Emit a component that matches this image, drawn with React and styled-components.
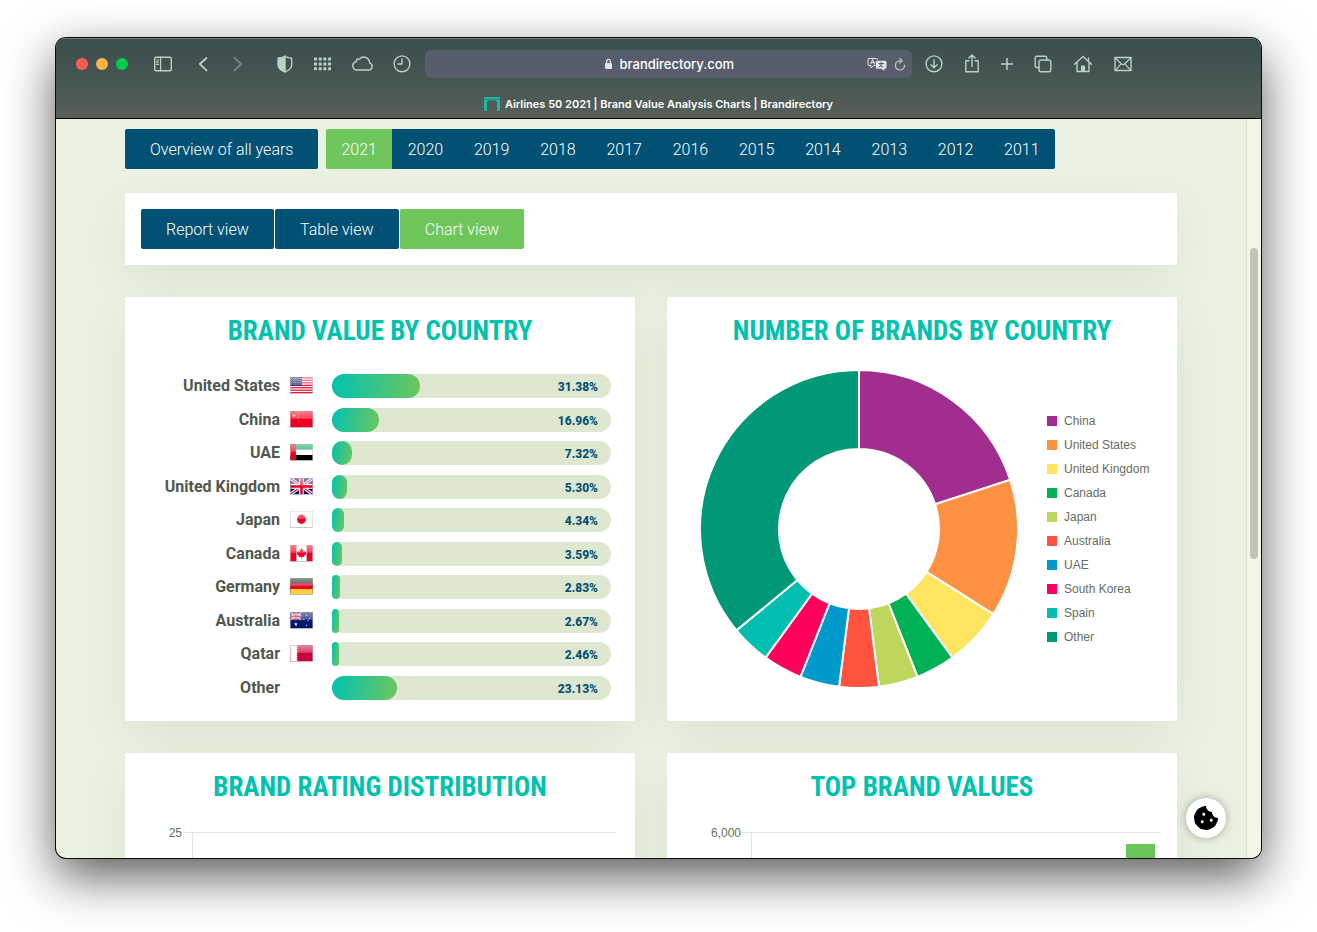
import React from "react";
import styled, { createGlobalStyle } from "styled-components";
import { FaCookieBite } from "react-icons/fa";

const Global = createGlobalStyle`
  *, *::before, *::after { box-sizing: border-box; }
  body { margin: 0; background: #fff; font-family: Roboto, "Liberation Sans", sans-serif; }
  button { border: 0; padding: 0; background: none; color: inherit; font: inherit; cursor: pointer; }
  h2 { margin: 0; }
  svg { display: block; }
`;

const Desktop = styled.div`
  height: 100vh;
  padding: 38px 56px 74px;
  overflow: hidden;
`;

const Window = styled.div`
  position: relative;
  height: 100%;
  display: flex;
  flex-direction: column;
  border-radius: 10px;
  overflow: hidden;
  background: #eaf1e1;
  box-shadow: 0 0 0 1px #0a0f0c, 0 18px 50px rgba(0, 0, 0, 0.66);
`;

const Chrome = styled.header`
  flex: none;
  background: linear-gradient(#394e4d, #485853 60%, #575e58);
  border-bottom: 1px solid #000;
  box-shadow: inset 0 1px 0 #6f807e;
  color: #b9d2c3;
`;

const Toolbar = styled.div`
  display: flex;
  align-items: center;
  height: 52px;
  padding: 0 129px 0 20px;
`;

const Lights = styled.div`
  display: flex;
  gap: 8px;
  margin-right: 25px;
`;

const Light = styled.button`
  width: 12px;
  height: 12px;
  border-radius: 50%;
  && { background: ${(p) => p.$color}; }
`;

const ToolGroup = styled.div`
  display: flex;
  align-items: center;
  gap: ${(p) => p.$gap || 20}px;
  margin-right: ${(p) => p.$after || 0}px;
`;

const ToolButton = styled.button`
  display: block;
  opacity: ${(p) => (p.disabled ? 0.4 : 1)};
`;

const AddressBar = styled.div`
  flex: 1;
  min-width: 0;
  height: 28px;
  margin-right: 13px;
  padding: 0 6px;
  display: grid;
  grid-template-columns: 1fr auto 1fr;
  align-items: center;
  border-radius: 6px;
  background: #575d6a;
  color: #e6e6ea;
`;

const AddressLabel = styled.label`
  grid-column: 2;
  display: flex;
  align-items: center;
  gap: 7px;
`;

const AddressInput = styled.input`
  width: 114px;
  padding: 0;
  border: 0;
  outline: 0;
  background: transparent;
  color: #fff;
  font: 500 13px/20px Inter, sans-serif;
`;

const AddressTools = styled.div`
  display: flex;
  justify-content: flex-end;
  align-items: center;
  gap: 7px;
`;

const TabTitle = styled.div`
  height: 28px;
  display: flex;
  align-items: center;
  justify-content: center;
  gap: 5px;
  color: #fff;
  font: 600 11px/16px Inter, sans-serif;
  white-space: nowrap;
`;

const Viewport = styled.div`
  flex: 1;
  min-height: 0;
  display: flex;
`;

const Page = styled.main`
  flex: 1;
  min-width: 0;
  overflow: hidden;
  padding: 10px 16px 0;
`;

const Container = styled.div`
  max-width: 1052px;
  margin: 0 auto;
`;

const ScrollTrack = styled.div`
  width: 15px;
  padding: 129px 3px 0;
  background: #f2f7e7;
  border-left: 1px solid #dbe4c9;
`;

const ScrollThumb = styled.div`
  width: 8px;
  height: 311px;
  border-radius: 4px;
  background: #c0c5b8;
`;

const YearNav = styled.nav`
  display: flex;
  gap: 8px;
  margin-bottom: 24px;
`;

const NavButton = styled.button`
  && {
    height: 40px;
    padding: 0 25px;
    border-radius: 2px;
    background: ${(p) => (p.$active ? "#6fc65b" : "#005174")};
    color: #fff;
    font-size: 16px;
    font-weight: 300;
    white-space: nowrap;
  }
`;

const OverviewButton = styled(NavButton)`
  && { width: 193px; }
`;

const YearGroup = styled.div`
  flex: 0 1 729px;
  display: flex;
  border-radius: 2px;
  overflow: hidden;
`;

const YearButton = styled(NavButton)`
  && {
    flex: 1;
    padding: 0;
    border-radius: 0;
  }
`;

const Card = styled.section`
  background: #fff;
  border-radius: 2px;
  box-shadow: 0 16px 48px -8px rgba(60, 80, 40, 0.1);
`;

const ViewBar = styled(Card)`
  display: flex;
  gap: 1px;
  padding: 16px;
  margin-bottom: 32px;
`;

const ViewButton = styled(NavButton)`
  && { min-width: 124px; }
`;

const CardGrid = styled.div`
  display: grid;
  grid-template-columns: 1fr 1fr;
  gap: 32px;
`;

const ChartCard = styled(Card)`
  min-height: 424px;
  padding-top: 16px;
`;

const CardTitle = styled.h2`
  margin-bottom: 24px;
  color: #00c2ad;
  font: 700 27px/37px "Roboto Condensed", "Liberation Sans Narrow", "Liberation Sans", sans-serif;
  text-align: center;
  text-transform: uppercase;
`;

const BarList = styled.div`
  height: 326px;
  padding: 0 24px;
  display: flex;
  flex-direction: column;
  justify-content: space-between;
`;

const BarRow = styled.div`
  display: grid;
  grid-template-columns: 131px 32px 1fr;
  column-gap: 10px;
  align-items: center;
  height: 24px;
`;

const BarLabel = styled.span`
  color: #50584f;
  font-size: 16px;
  font-weight: 700;
  line-height: 24px;
  text-align: right;
  white-space: nowrap;
`;

const Track = styled.div`
  position: relative;
  height: 24px;
  border-radius: 12px;
  background: #dee7d0;
`;

const Fill = styled.div`
  height: 24px;
  border-radius: 12px;
  background: linear-gradient(100deg, #00c2b2, #6fc65b);
`;

const Percent = styled.span`
  position: absolute;
  top: 1px;
  right: 13px;
  color: #005174;
  font-size: 12px;
  font-weight: 800;
  line-height: 24px;
`;

const DonutLayout = styled.div`
  display: flex;
  justify-content: space-between;
  align-items: flex-start;
  padding: 0 25px 0 32px;
`;

const DonutSvg = styled.svg`
  flex: none;
  width: 320px;
  height: 320px;
  margin-top: -5px;
`;

const Legend = styled.ul`
  margin: 35px 0 0;
  padding: 0;
  width: 105px;
  list-style: none;
`;

const LegendItem = styled.li`
  display: flex;
  align-items: center;
  gap: 7px;
  color: #666d63;
  font: 12px/24px "Liberation Sans", sans-serif;
  white-space: nowrap;

  &::before {
    content: "";
    width: 10px;
    height: 10px;
    background: ${(p) => p.$color};
  }
`;

const AxisChart = styled.svg`
  width: 100%;
  height: auto;
  margin-top: -16px;
  font: 12px "Liberation Sans", sans-serif;
`;

const CookieButton = styled.button`
  position: absolute;
  right: 35px;
  bottom: 20px;
  && {
    width: 40px;
    height: 40px;
    display: grid;
    place-items: center;
    border-radius: 50%;
    background: #fff;
    color: #000;
    box-shadow: 0 0 8px rgba(0, 0, 0, 0.3);
  }
`;

const Icon = ({ w, h = 20, children, sw = 1.4 }) => (
  <svg width={w} height={h} viewBox={`0 0 ${w} ${h}`} fill="none" stroke="currentColor" strokeWidth={sw} strokeLinecap="round" strokeLinejoin="round" aria-hidden="true">
    {children}
  </svg>
);

const SidebarIcon = () => (
  <Icon w={20}>
    <rect x="1.7" y="3.2" width="16.6" height="13.6" rx="1.2" />
    <path d="M7.6 3.2v13.6M3.6 6h2M3.6 8.2h2M3.6 10.4h2" strokeWidth="1.2" />
  </Icon>
);
const BackIcon = () => <Icon w={16} sw={1.8}><path d="M11.5 4L4.8 10l6.7 6.3" /></Icon>;
const ForwardIcon = () => <Icon w={16} sw={1.8}><path d="M4.5 4l6.7 6-6.7 6.3" /></Icon>;
const ShieldIcon = () => (
  <Icon w={16}>
    <path d="M8 2.2c2 1.4 4.200 1.900 6.700 2v6.800c0 3-2.800 5.400-6.700 6.800-3.900-1.400-6.700-3.800-6.700-6.800V4.200c2.500-.1 4.700-.6 6.700-2z" />
    <path d="M8 2.2v15.600c-3.900-1.400-6.700-3.800-6.700-6.800V4.200c2.500-.1 4.700-.6 6.700-2z" fill="currentColor" />
  </Icon>
);
const GridIcon = () => (
  <Icon w={18}>
    {[0, 1, 2].map((r) =>
      [0, 1, 2, 3].map((c) => (
        <rect key={`${r}-${c}`} x={1 + c * 4.7} y={3.6 + r * 4.8} width="3" height="3" rx="0.500" fill="currentColor" stroke="none" />
      ))
    )}
  </Icon>
);
const CloudIcon = () => (
  <Icon w={22}>
    <path d="M5.800 16a4.100 4.100 0 0 1-.8-8.100 3.200 3.200 0 0 1 3.500-2.800 5.700 5.700 0 0 1 10 3.700 3.700 3.700 0 0 1-.6 7.200z" />
  </Icon>
);
const ClockIcon = () => (
  <Icon w={18}>
    <circle cx="9" cy="9.800" r="7.900" />
    <path d="M9 5v5H5" />
  </Icon>
);
const DownloadIcon = () => (
  <Icon w={18}>
    <circle cx="9" cy="9.800" r="7.900" />
    <path d="M9 5.700v8M5.900 10.800L9 13.800l3.100-3" />
  </Icon>
);
const ShareIcon = () => (
  <Icon w={16}>
    <path d="M5 6.800H1.800v11h12.400v-11H11M8 12.500V1M4.900 4L8 .9 11.100 4" />
  </Icon>
);
const PlusIcon = () => <Icon w={12} sw={1.500}><path d="M6 4v12M0 10h12" strokeLinecap="butt" /></Icon>;
const TabsIcon = () => (
  <Icon w={18}>
    <rect x="5" y="6" width="11.800" height="11.800" rx="2" />
    <path d="M5 13.500H3a1.800 1.800 0 0 1-1.800-1.800V4A1.800 1.800 0 0 1 3 2.200h8A1.800 1.800 0 0 1 12.800 4v2" />
  </Icon>
);
const HomeIcon = () => (
  <Icon w={20}>
    <path d="M1.500 10.300L10 2.500l8.500 7.800M4 8.500v9h12v-9M15.500 7V4" />
    <rect x="8" y="11.500" width="4" height="6" fill="currentColor" stroke="none" />
  </Icon>
);
const MailIcon = () => (
  <Icon w={18}>
    <rect x="1" y="3.500" width="16" height="13" />
    <path d="M1.300 4l6.200 6a2.100 2.100 0 0 0 3 0l6.200-6M1.300 16.300l5.400-6M16.700 16.300l-5.400-6" strokeWidth="1.200" />
  </Icon>
);
const LockIcon = () => (
  <Icon w={9} h={12}>
    <rect x="1" y="5" width="7" height="6" rx="1" fill="currentColor" stroke="none" />
    <path d="M2.600 5V3.200a1.900 1.900 0 0 1 3.800 0V5" strokeWidth="1.200" />
  </Icon>
);
const TranslateIcon = () => (
  <Icon w={20} h={14} sw={1}>
    <path d="M8 8.500H6.500L4 11V8.500H2a1 1 0 0 1-1-1v-5a1 1 0 0 1 1-1h7.500a1 1 0 0 1 1 1" />
    <path d="M3.700 7l2-4.500 2 4.500M4.400 5.600h2.500" />
    <path d="M10.300 3.800h7.700a1.500 1.500 0 0 1 1.500 1.500v4.900a1.500 1.500 0 0 1-1.500 1.500h-.8v2.200l-2.700-2.200h-4.200a1.500 1.500 0 0 1-1.500-1.500V5.300a1.500 1.500 0 0 1 1.500-1.500z" fill="currentColor" stroke="none" />
    <path d="M11.800 6.500h4.800M14.200 5.200v1.300M12 10c1.700-.6 2.900-1.900 3.300-3.500M12.800 7.200c.6 1.300 1.700 2.300 3.400 2.800" stroke="#575d6a" />
  </Icon>
);
const ReloadIcon = () => (
  <Icon w={12} h={14} sw={1.2}>
    <path d="M10.600 8A4.600 4.600 0 1 1 6 3.800h2M5.800 1.400l2.400 2.400-2.400 2.400" opacity="0.750" />
  </Icon>
);
const Favicon = () => (
  <svg width="16" height="14" viewBox="0 0 16 14" aria-hidden="true">
    <path d="M0 0h16v14h-3V5.500a3 3 0 0 0-1.500-2h-7A3 3 0 0 0 3 5.500V14H0z" fill="#1fb5a5" />
    <path d="M0 2.500h16" stroke="#2c7f76" strokeWidth="0.800" />
  </svg>
);

const star = (cx, cy, r, fill, key) => {
  const pts = [];
  for (let i = 0; i < 10; i++) {
    const a = (Math.PI * i) / 5 - Math.PI / 2;
    const q = i % 2 ? r * 0.4 : r;
    pts.push(`${cx + q * Math.cos(a)},${cy + q * Math.sin(a)}`);
  }
  return <polygon key={key} points={pts.join(" ")} fill={fill} />;
};

const UnionJack = () => (
  <>
    <rect width="24" height="16" fill="#00176b" />
    <path d="M0 0l24 16M24 0L0 16" stroke="#fff" strokeWidth="3.200" />
    <path d="M0 0l24 16M24 0L0 16" stroke="#e4002b" strokeWidth="1.100" />
    <path d="M12 0v16M0 8h24" stroke="#fff" strokeWidth="5" />
    <path d="M12 0v16M0 8h24" stroke="#e4002b" strokeWidth="2.800" />
  </>
);

const flagArt = {
  us: (
    <>
      <rect width="24" height="16" fill="#fff" />
      {[0, 1, 2, 3, 4, 5, 6].map((i) => <rect key={i} y={i * 2.46} width="24" height="1.230" fill="#ee0a35" />)}
      <rect width="12.500" height="8.600" fill="#1c2f6b" />
      {[0, 1, 2, 3].map((r) => [0, 1, 2, 3, 4, 5].map((c) => <circle key={`${r}${c}`} cx={1.3 + c * 2} cy={1.2 + r * 2.1} r="0.400" fill="#fff" />))}
    </>
  ),
  cn: (
    <>
      <rect width="24" height="16" fill="#ee0026" />
      {star(4, 4.2, 2.1, "#ffdd2e", "a")}
      {[[7.8, 1.6], [9.2, 3.2], [9.2, 5.2], [7.8, 6.8]].map(([x, y], i) => star(x, y, 0.8, "#ffdd2e", i))}
    </>
  ),
  ae: (
    <>
      <rect width="24" height="16" fill="#fff" />
      <rect width="24" height="5.300" fill="#0ba05e" />
      <rect y="10.700" width="24" height="5.300" fill="#000" />
      <rect width="6" height="16" fill="#ee0026" />
    </>
  ),
  gb: <UnionJack />,
  jp: (
    <>
      <rect width="24" height="16" fill="#fff" />
      <circle cx="12" cy="8" r="4.700" fill="#ee0026" />
    </>
  ),
  ca: (
    <>
      <rect width="24" height="16" fill="#fff" />
      <path d="M0 0h6.500v16H0zM17.500 0H24v16h-6.500z" fill="#ee0026" />
      <path d="M12 2.500l1.100 2 1.200-.5-.4 3 1.500-1.400.4.900 1.500-.2-.6 1.700.7.500-2.800 2.300.2 1-2.500-.3v2.200h-.6v-2.200l-2.500.3.200-1-2.800-2.300.7-.5-.6-1.700 1.500.2.400-.9 1.500 1.400-.4-3 1.200.5z" fill="#ee0026" />
    </>
  ),
  de: (
    <>
      <rect width="24" height="16" fill="#222a1f" />
      <rect y="5.300" width="24" height="5.400" fill="#ee0026" />
      <rect y="10.700" width="24" height="5.300" fill="#ffce3a" />
    </>
  ),
  au: (
    <>
      <rect width="24" height="16" fill="#00176b" />
      <svg width="12" height="8" viewBox="0 0 24 16"><UnionJack /></svg>
      {star(6, 11.8, 2.2, "#fff", "c")}
      {[[17.5, 3], [14.5, 7], [20.5, 6], [17.5, 13], [19, 8.5]].map(([x, y], i) => star(x, y, 1, "#fff", i))}
    </>
  ),
  qa: (
    <>
      <rect width="24" height="16" fill="#c8003c" />
      <path d="M0 0h6.500l1.500 1-1.500 1 1.500 1-1.500 1 1.500 1-1.500 1 1.500 1-1.500 1 1.500 1-1.500 1 1.500 1-1.500 1 1.500 1-1.500 1 1.500 1-1.500 1H0z" fill="#fff" />
    </>
  ),
};

const Flag = ({ code }) => (
  <svg width="23" height="18" viewBox="0 0 23 18" aria-hidden="true">
    <defs>
      <linearGradient id={`gloss-${code}`} x1="0" y1="0" x2="0" y2="1">
        <stop offset="0" stopColor="#fff" stopOpacity="0.500" />
        <stop offset="1" stopColor="#fff" stopOpacity="0.250" />
      </linearGradient>
    </defs>
    <rect width="23" height="17" fill="#c4c6c2" />
    <svg x="0.300" y="0.300" width="22.400" height="16" viewBox="0 0 24 16" preserveAspectRatio="none">
      {flagArt[code]}
      <rect width="24" height="7.500" fill={`url(#gloss-${code})`} />
    </svg>
  </svg>
);

const years = [2021, 2020, 2019, 2018, 2017, 2016, 2015, 2014, 2013, 2012, 2011];
const views = ["Report view", "Table view", "Chart view"];

const valueShares = [
  ["United States", "us", "31.38"],
  ["China", "cn", "16.96"],
  ["UAE", "ae", "7.32"],
  ["United Kingdom", "gb", "5.30"],
  ["Japan", "jp", "4.34"],
  ["Canada", "ca", "3.59"],
  ["Germany", "de", "2.83"],
  ["Australia", "au", "2.67"],
  ["Qatar", "qa", "2.46"],
  ["Other", null, "23.13"],
];

const brandCounts = [
  ["China", 20, "#a12d8e"],
  ["United States", 14, "#ff9142"],
  ["United Kingdom", 6, "#ffe55f"],
  ["Canada", 4, "#00b156"],
  ["Japan", 4, "#bdd75c"],
  ["Australia", 4, "#ff533e"],
  ["UAE", 4, "#0099cc"],
  ["South Korea", 4, "#ff005c"],
  ["Spain", 4, "#00bfb1"],
  ["Other", 36, "#009877"],
];

const Donut = () => {
  const c = 160;
  const outer = 159;
  const inner = 80;
  const at = (share, r) => {
    const a = (share / 100) * Math.PI * 2;
    return `${c + r * Math.sin(a)} ${c - r * Math.cos(a)}`;
  };
  let start = 0;
  return (
    <DonutSvg viewBox="0 0 320 320" role="img" aria-label="Number of brands by country">
      {brandCounts.map(([name, count, color]) => {
        const from = start;
        const to = start + count;
        start = to;
        return (
          <path
            key={name}
            d={`M${at(from, outer)}A${outer} ${outer} 0 0 1 ${at(to, outer)}L${at(to, inner)}A${inner} ${inner} 0 0 0 ${at(from, inner)}Z`}
            fill={color}
            stroke="#fff"
            strokeWidth="2"
          />
        );
      })}
    </DonutSvg>
  );
};

export default function App() {
  return (
    <>
      <Global />
      <Desktop>
        <Window>
          <Chrome>
            <Toolbar>
              <Lights>
                <Light $color="#ff5b52" aria-label="Close" />
                <Light $color="#ffb347" aria-label="Minimize" />
                <Light $color="#00ca4e" aria-label="Zoom" />
              </Lights>
              <ToolGroup $after={22}>
                <ToolButton aria-label="Sidebar"><SidebarIcon /></ToolButton>
              </ToolGroup>
              <ToolGroup $gap={19} $after={31}>
                <ToolButton aria-label="Back"><BackIcon /></ToolButton>
                <ToolButton aria-label="Forward" disabled><ForwardIcon /></ToolButton>
              </ToolGroup>
              <ToolGroup $after={14}>
                <ToolButton aria-label="Privacy report"><ShieldIcon /></ToolButton>
                <ToolButton aria-label="Top sites"><GridIcon /></ToolButton>
                <ToolButton aria-label="Cloud tabs"><CloudIcon /></ToolButton>
                <ToolButton aria-label="History"><ClockIcon /></ToolButton>
              </ToolGroup>
              <AddressBar>
                <AddressLabel>
                  <LockIcon />
                  <AddressInput aria-label="Address" defaultValue="brandirectory.com" />
                </AddressLabel>
                <AddressTools>
                  <ToolButton aria-label="Translate"><TranslateIcon /></ToolButton>
                  <ToolButton aria-label="Reload"><ReloadIcon /></ToolButton>
                </AddressTools>
              </AddressBar>
              <ToolGroup $gap={21}>
                <ToolButton aria-label="Downloads"><DownloadIcon /></ToolButton>
                <ToolButton aria-label="Share"><ShareIcon /></ToolButton>
                <ToolButton aria-label="New tab"><PlusIcon /></ToolButton>
                <ToolButton aria-label="Tab overview"><TabsIcon /></ToolButton>
                <ToolButton aria-label="Home"><HomeIcon /></ToolButton>
                <ToolButton aria-label="Mail"><MailIcon /></ToolButton>
              </ToolGroup>
            </Toolbar>
            <TabTitle>
              <Favicon />
              Airlines 50 2021 | Brand Value Analysis Charts | Brandirectory
            </TabTitle>
          </Chrome>
          <Viewport>
            <Page>
              <Container>
                <YearNav aria-label="Years">
                  <OverviewButton>Overview of all years</OverviewButton>
                  <YearGroup>
                    {years.map((y) => <YearButton key={y} $active={y === 2021}>{y}</YearButton>)}
                  </YearGroup>
                </YearNav>
                <ViewBar>
                  {views.map((v) => <ViewButton key={v} $active={v === "Chart view"}>{v}</ViewButton>)}
                </ViewBar>
                <CardGrid>
                  <ChartCard>
                    <CardTitle>Brand value by country</CardTitle>
                    <BarList>
                      {valueShares.map(([name, code, share]) => (
                        <BarRow key={name}>
                          <BarLabel>{name}</BarLabel>
                          <span>{code && <Flag code={code} />}</span>
                          <Track>
                            <Fill style={{ width: `${share}%` }} />
                            <Percent>{share}%</Percent>
                          </Track>
                        </BarRow>
                      ))}
                    </BarList>
                  </ChartCard>
                  <ChartCard>
                    <CardTitle>Number of brands by country</CardTitle>
                    <DonutLayout>
                      <Donut />
                      <Legend>
                        {brandCounts.map(([name, , color]) => <LegendItem key={name} $color={color}>{name}</LegendItem>)}
                      </Legend>
                    </DonutLayout>
                  </ChartCard>
                  <ChartCard>
                    <CardTitle>Brand rating distribution</CardTitle>
                    <AxisChart viewBox="0 0 510 316" role="img" aria-label="Brand rating distribution">
                      <text x="57" y="23" textAnchor="end" fill="#666d63">25</text>
                      <path d="M58 18.500H491M67.500 18.500V306" stroke="#e3e3e3" />
                    </AxisChart>
                  </ChartCard>
                  <ChartCard>
                    <CardTitle>Top brand values</CardTitle>
                    <AxisChart viewBox="0 0 510 316" role="img" aria-label="Top brand values">
                      <text x="74" y="23" textAnchor="end" fill="#666d63">6,000</text>
                      <path d="M75 18.500H494M84.500 18.500V306" stroke="#e3e3e3" />
                      <rect x="459" y="30" width="29" height="276" fill="#6cc55b" />
                    </AxisChart>
                  </ChartCard>
                </CardGrid>
              </Container>
            </Page>
            <ScrollTrack><ScrollThumb /></ScrollTrack>
          </Viewport>
          <CookieButton aria-label="Cookie settings"><FaCookieBite size={24} /></CookieButton>
        </Window>
      </Desktop>
    </>
  );
}
